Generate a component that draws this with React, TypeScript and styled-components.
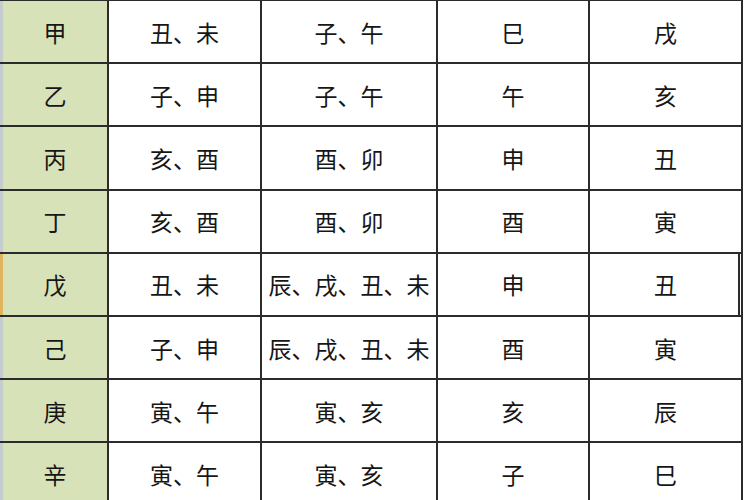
import React, { FC } from "react";
import styled, { createGlobalStyle } from "styled-components";

const GlobalStyle = createGlobalStyle`
  html, body {
    margin: 0;
    padding: 0;
    background: #fff;
  }
  body {
    font-family: "Noto Sans CJK SC", "Noto Sans", sans-serif;
    overflow: hidden;
  }
`;

const Sheet = styled.div`
  display: grid;
  width: 741px;
  grid-template-columns: 107px 151px 174px 150px 151px;
  grid-auto-rows: 61.2px;
  gap: 2px;
  padding: 1px 2px 0 0;
  background: #2b2b2b;
`;

const StemCell = styled.div<{ $marked?: boolean }>`
  display: flex;
  align-items: center;
  justify-content: center;
  background: #d8e2b9;
  border-left: 3px solid ${(p) => (p.$marked ? "#e0b55e" : "#c4ccd0")};
  font-size: 23px;
  color: #161616;
`;

const Cell = styled.div<{ $selectedEdge?: boolean }>`
  display: flex;
  align-items: center;
  justify-content: center;
  background: #fff;
  font-size: 23px;
  color: #161616;
  white-space: nowrap;
  box-shadow: ${(p) =>
    p.$selectedEdge ? "inset -1px 0 0 #fff, inset -3px 0 0 #2b2b2b" : "none"};
`;

type Row = { stem: string; cells: string[] };

const rows: Row[] = [
  { stem: "甲", cells: ["丑、未", "子、午", "巳", "戌"] },
  { stem: "乙", cells: ["子、申", "子、午", "午", "亥"] },
  { stem: "丙", cells: ["亥、酉", "酉、卯", "申", "丑"] },
  { stem: "丁", cells: ["亥、酉", "酉、卯", "酉", "寅"] },
  { stem: "戊", cells: ["丑、未", "辰、戌、丑、未", "申", "丑"] },
  { stem: "己", cells: ["子、申", "辰、戌、丑、未", "酉", "寅"] },
  { stem: "庚", cells: ["寅、午", "寅、亥", "亥", "辰"] },
  { stem: "辛", cells: ["寅、午", "寅、亥", "子", "巳"] },
];

const App: FC = () => {
  return (
    <>
      <GlobalStyle />
      <Sheet>
        {rows.map((row) => {
          const active = row.stem === "戊";
          return (
            <React.Fragment key={row.stem}>
              <StemCell $marked={active}>{row.stem}</StemCell>
              {row.cells.map((c, i) => (
                <Cell key={i} $selectedEdge={active && i === row.cells.length - 1}>
                  {c}
                </Cell>
              ))}
            </React.Fragment>
          );
        })}
      </Sheet>
    </>
  );
};

export default App;
